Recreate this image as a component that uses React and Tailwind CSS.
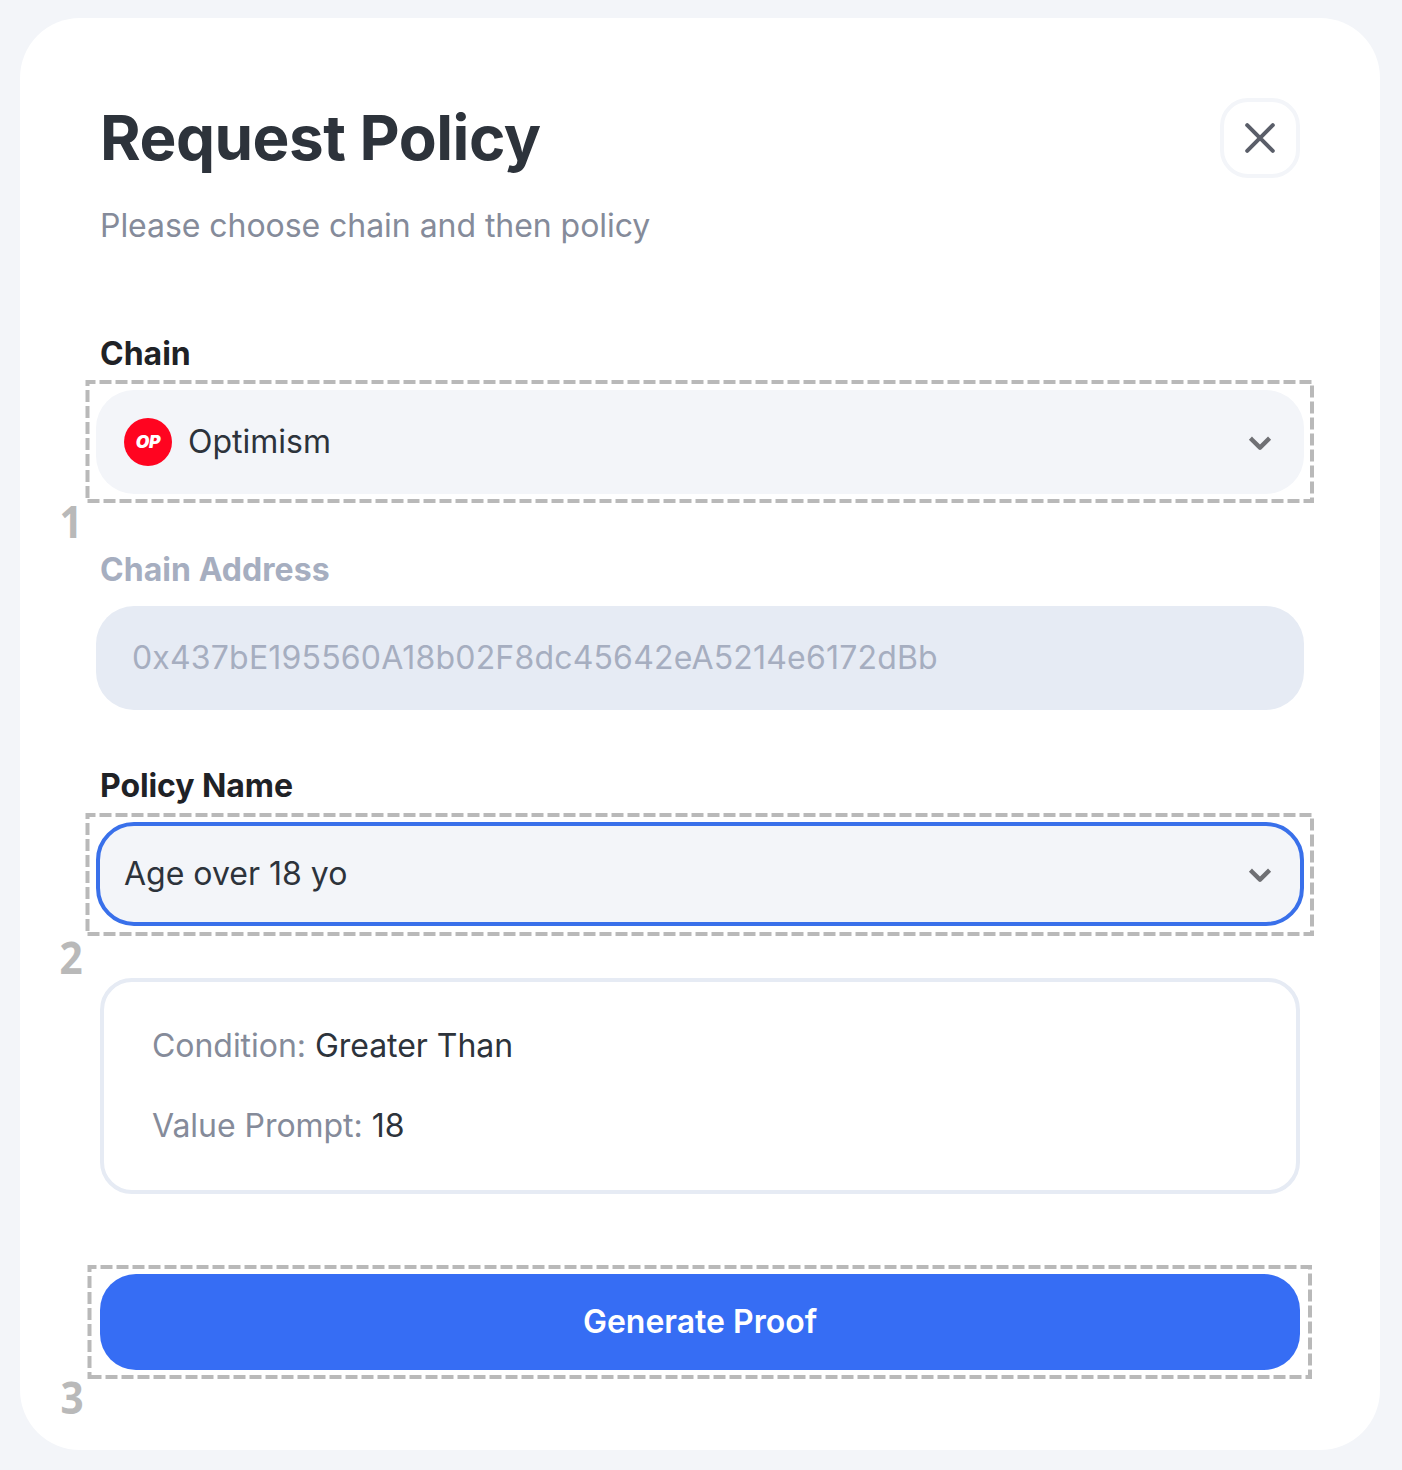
import React from "react";

function Chevron() {
  return (
    <svg className="h-12 w-12 shrink-0" viewBox="0 0 48 48" fill="none">
      <path d="M16 21.7 24 29.6l8-7.9" stroke="#6f7074" strokeWidth="4.4" strokeLinecap="square" strokeLinejoin="round" />
    </svg>
  );
}

/* Dashed frame and step number laid over the control it marks. */
function Marker({ step, width, height, svgClass, stepClass }) {
  return (
    <>
      <svg className={`pointer-events-none absolute ${svgClass}`} width={width + 5} height={height + 4} fill="none">
        <path d={`M2.5 ${height + 2}H${width + 2.5}V2H2.5Z`} stroke="#b9b9b9" strokeWidth="4" strokeDasharray="12 4" />
      </svg>
      <span
        className={`absolute w-[26px] scale-x-90 text-center font-['Noto_Sans',sans-serif] text-[45px] leading-[60px] font-bold text-[#b9b9b9] ${stepClass}`}
      >
        {step}
      </span>
    </>
  );
}

function Label({ children, className = "text-[#1f2226]" }) {
  return <div className={`mb-4 text-[32px] leading-10 font-bold ${className}`}>{children}</div>;
}

export default function App() {
  return (
    <div className="h-[1470px] w-[1402px] overflow-hidden bg-[#f3f5f9] pt-[18px] pl-5 font-[Inter,sans-serif]">
      <div className="h-[1432px] w-[1360px] rounded-[60px] bg-white p-20 text-[32px] leading-10 text-[#2d333b]">
        <div className="flex items-start justify-between">
          <h1 className="text-[62px] leading-[80px] font-bold tracking-[-0.5px]">Request Policy</h1>
          <button className="flex h-20 w-20 items-center justify-center rounded-[28px] border-4 border-[#f3f5f9]">
            <svg className="h-10 w-10" viewBox="0 0 40 40" fill="none">
              <path d="M7.2 7.2l25.6 25.6M32.8 7.2 7.2 32.8" stroke="#5a5e69" strokeWidth="4" strokeLinecap="round" />
            </svg>
          </button>
        </div>
        <p className="mt-7 tracking-[-0.05px] text-[#858b9a]">Please choose chain and then policy</p>

        <div className="mt-[88px]">
          <Label>Chain</Label>
          <div className="relative -mx-1 flex h-26 items-center rounded-[38px] bg-[#f3f5f9] pr-5 pl-7">
            <span className="flex h-12 w-12 items-center justify-center rounded-full bg-[#ff0420] text-[17.5px] leading-none font-black tracking-[-0.2px] text-white italic">
              OP
            </span>
            <span className="ml-4 flex-1">Optimism</span>
            <Chevron />
            <Marker step="1" width={1224.5} height={119} svgClass="-top-[10px] -left-[11px]" stepClass="top-[101px] -left-[38px]" />
          </div>
        </div>

        <div className="mt-14">
          <Label className="tracking-[0.05px] text-[#a6aec0]">Chain Address</Label>
          <div className="-mx-1 flex h-26 items-center rounded-[38px] bg-[#e6ebf4] px-9 tracking-[0.18px] text-[#a6aec0]">
            0x437bE195560A18b02F8dc45642eA5214e6172dBb
          </div>
        </div>

        <div className="mt-14">
          <Label className="tracking-[-0.08px] text-[#1f2226]">Policy Name</Label>
          <div className="relative -mx-1 flex h-26 items-center rounded-[38px] border-4 border-[#3970ea] bg-[#f3f5f9] pr-4 pl-6">
            <span className="flex-1">Age over 18 yo</span>
            <Chevron />
            <Marker step="2" width={1224.5} height={119} svgClass="-top-[13px] -left-[15px]" stepClass="top-[101px] -left-[42px]" />
          </div>
        </div>

        <div className="mt-[52px] flex h-[216px] flex-col gap-10 rounded-[32px] border-4 border-[#e6ebf4] px-12 py-11 tracking-[-0.04px]">
          <div className="text-[#858b9a]">
            Condition: <span className="text-[#2d333b]">Greater Than</span>
          </div>
          <div className="text-[#858b9a]">
            Value Prompt: <span className="text-[#2d333b]">18</span>
          </div>
        </div>

        <div className="relative mt-20">
          <button className="block h-24 w-full rounded-[36px] bg-[#366df4] font-semibold text-white">Generate Proof</button>
          <Marker step="3" width={1220.5} height={110} svgClass="-top-[9px] -left-[13px]" stepClass="top-[93px] -left-[41px]" />
        </div>
      </div>
    </div>
  );
}
